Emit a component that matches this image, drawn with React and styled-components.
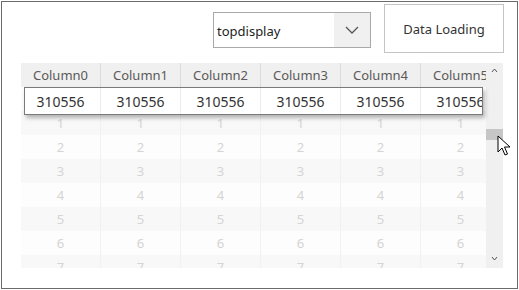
import React from 'react';
import styled, { createGlobalStyle } from 'styled-components';

const Global = createGlobalStyle`
  body {
    margin: 0;
    background: #fff;
    font-family: "Noto Sans", "Open Sans", sans-serif;
  }
`;

const Frame = styled.div`
  position: relative;
  box-sizing: border-box;
  margin: 1px 0 0 1px;
  width: 517px;
  height: 288px;
  border: 1px solid #6b6b6b;
  overflow: hidden;
`;

const Toolbar = styled.div`
  display: flex;
  justify-content: flex-end;
  align-items: flex-start;
  gap: 13px;
  padding: 2px 13px 0 0;
`;

const Select = styled.div`
  box-sizing: border-box;
  display: flex;
  margin-top: 8px;
  width: 158px;
  height: 36px;
  border: 1px solid #a9a9a9;
  background: #fff;
`;

const SelectText = styled.div`
  flex: 1;
  display: flex;
  align-items: center;
  padding: 1px 0 0 3px;
  font-size: 13px;
  color: #222;
`;

const SelectArrow = styled.div`
  width: 36px;
  display: flex;
  align-items: center;
  justify-content: center;
  background: #f0f0f0;
`;

const LoadButton = styled.button`
  box-sizing: border-box;
  width: 120px;
  height: 49px;
  border: 1px solid #c4c4c4;
  background: #fff;
  font-family: inherit;
  font-size: 13px;
  color: #333;
  padding: 0;
`;

const Grid = styled.div`
  position: relative;
  display: flex;
  margin: 10px 0 0 19px;
  width: 482px;
  height: 205px;
  overflow: hidden;
`;

const Viewport = styled.div`
  width: 465px;
  overflow: hidden;
`;

const Row = styled.div`
  display: flex;
  width: 480px;
  height: 24px;
  background: ${p => p.$bg};
`;

const HeadCell = styled.div`
  box-sizing: border-box;
  flex: 0 0 80px;
  display: flex;
  align-items: center;
  justify-content: center;
  border-right: 1px solid #dcdcdc;
  font-size: 13px;
  color: #5a5a5a;
`;

const Cell = styled.div`
  box-sizing: border-box;
  flex: 0 0 80px;
  display: flex;
  align-items: center;
  justify-content: center;
  border-right: 1px solid #f1f1f1;
  font-size: 13px;
  color: #d4d4d4;
`;

const Scrollbar = styled.div`
  position: relative;
  width: 17px;
  background: #f0f0f0;
`;

const ScrollArrow = styled.div`
  position: absolute;
  left: 0;
  width: 17px;
  top: ${p => p.$top}px;
  display: flex;
  justify-content: center;
`;

const Thumb = styled.div`
  position: absolute;
  left: 0;
  top: 66px;
  width: 17px;
  height: 11px;
  background: #c6c6c6;
`;

const Ghost = styled.div`
  position: absolute;
  left: 3px;
  top: 24px;
  box-sizing: border-box;
  width: 459px;
  height: 28px;
  border: 1px solid #7a7a7a;
  background: #fff;
  overflow: hidden;
  box-shadow: 2px 3px 4px rgba(0, 0, 0, 0.28);
`;

const GhostTrack = styled.div`
  display: flex;
  height: 100%;
  margin-left: -4px;
`;

const GhostCell = styled.div`
  box-sizing: border-box;
  flex: 0 0 80px;
  display: flex;
  align-items: center;
  justify-content: center;
  border-right: 1px solid #ececec;
  font-size: 14px;
  color: #333;
`;

const Pointer = styled.svg`
  position: absolute;
  left: 495px;
  top: 133px;
`;

const cols = [0, 1, 2, 3, 4, 5];
const rows = [0, 1, 2, 3, 4, 5, 6, 7];

export default function App() {
  return (
    <>
      <Global />
      <Frame>
        <Toolbar>
          <Select>
            <SelectText>topdisplay</SelectText>
            <SelectArrow>
              <svg width="14" height="8" viewBox="0 0 14 8">
                <polyline points="1,1 7,7 13,1" fill="none" stroke="#555" strokeWidth="1.3" />
              </svg>
            </SelectArrow>
          </Select>
          <LoadButton>Data Loading</LoadButton>
        </Toolbar>
        <Grid>
          <Viewport>
            <Row $bg="#f0f0f0">
              {cols.map(c => <HeadCell key={c}>Column{c}</HeadCell>)}
            </Row>
            {rows.map(r => (
              <Row key={r} $bg={r % 2 ? '#f8f8f8' : '#fdfdfd'}>
                {cols.map(c => <Cell key={c}>{r}</Cell>)}
              </Row>
            ))}
          </Viewport>
          <Scrollbar>
            <ScrollArrow $top={5}>
              <svg width="7" height="5" viewBox="0 0 7 5">
                <polyline points="1,4 3.5,1 6,4" fill="none" stroke="#555" strokeWidth="1" />
              </svg>
            </ScrollArrow>
            <Thumb />
            <ScrollArrow $top={193}>
              <svg width="7" height="5" viewBox="0 0 7 5">
                <polyline points="1,1 3.5,4 6,1" fill="none" stroke="#555" strokeWidth="1" />
              </svg>
            </ScrollArrow>
          </Scrollbar>
          <Ghost>
            <GhostTrack>
              {cols.map(c => <GhostCell key={c}>310556</GhostCell>)}
            </GhostTrack>
          </Ghost>
        </Grid>
        <Pointer width="14" height="22" viewBox="0 0 14 22">
          <path d="M1 1 L1 17 L5 13 L8 20 L10.5 19 L7.5 12 L13 12 Z" fill="#fff" stroke="#000" strokeWidth="1" strokeLinejoin="miter" />
        </Pointer>
      </Frame>
    </>
  );
}
